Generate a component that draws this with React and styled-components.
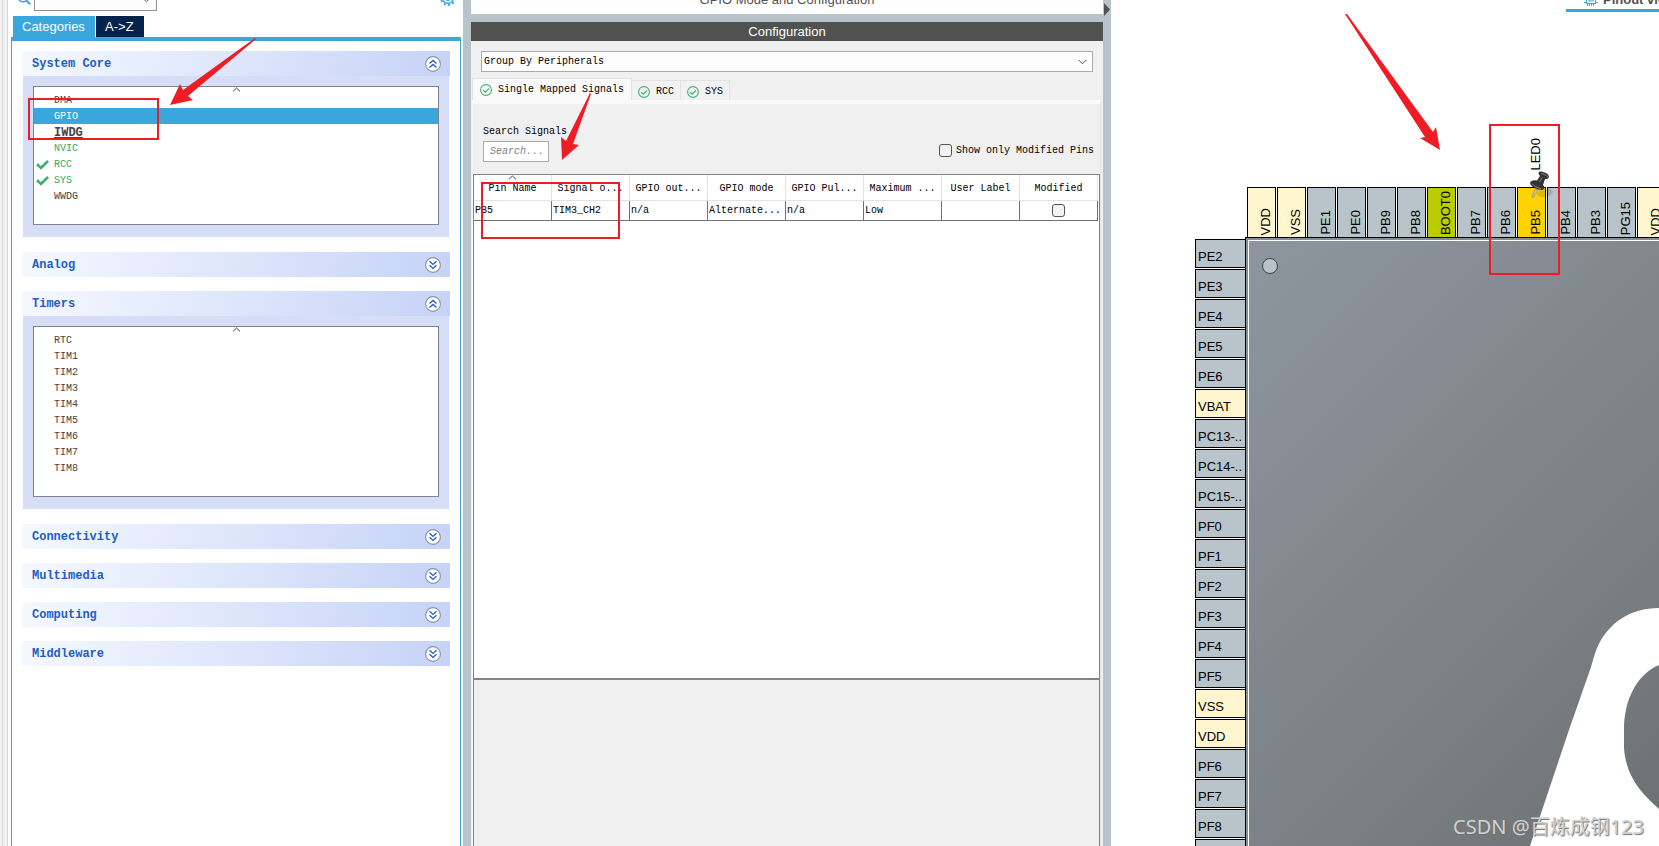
import React from "react";
import styled, { createGlobalStyle, css } from "styled-components";

const mono = `"Liberation Mono", "DejaVu Sans Mono", monospace`;
const sans = `"Liberation Sans", Arial, sans-serif`;
const blue = "#39a7db";
const steel = "#b8c4ca";
const line = "#80838f";
const red = "#ee1c25";

const GlobalStyle = createGlobalStyle`
  *, *::before, *::after { box-sizing: border-box; }
  html, body, #root { height: 100%; }
  body { margin: 0; background: #fff; overflow: hidden; font-family: ${sans}; }
  button, input, select { font: inherit; color: inherit; margin: 0; padding: 0; border: 0; background: none; border-radius: 0; }
  ul { list-style: none; margin: 0; padding: 0; }
  h1, h2, h3 { margin: 0; font: inherit; }
  svg { display: block; flex: none; }
`;

const Page = styled.div`
  height: 100vh;
  overflow: hidden;
  display: grid;
  grid-template-columns: 463fr 648fr 548fr;
`;

/* ---------- categories panel ---------- */

const CategoriesPane = styled.aside`
  position: relative;
  display: flex;
  min-width: 0;
`;

const Gutter = styled.div`
  width: 8px;
  margin-right: 3px;
  flex: none;
  background: #f0f0f0;
  border-right: 1px solid #d4d4d4;
  &::before {
    content: "";
    display: block;
    width: 3px;
    height: 100%;
    border-right: 1px solid #d9d9d9;
  }
`;

const CategoriesColumn = styled.div`
  flex: 1;
  min-width: 0;
  display: flex;
  flex-direction: column;
`;

const SearchBar = styled.div`
  height: 16px;
  padding: 0 7px 0 6px;
  display: flex;
  align-items: flex-end;
  justify-content: space-between;
  overflow: hidden;
`;

const SearchGroup = styled.div`
  display: flex;
  align-items: flex-end;
  gap: 3px;
  padding-bottom: 5px;
`;

const SearchIconBox = styled.span`
  padding-bottom: 6px;
`;

const GearButton = styled.button`
  padding-bottom: 10px;
  color: ${blue};
`;

const selectArrow = css`
  appearance: none;
  background: #fdfdfd
    url("data:image/svg+xml,%3Csvg xmlns='http://www.w3.org/2000/svg' width='9' height='6'%3E%3Cpath d='M.5 .8L4.5 4.8L8.5 .8' fill='none' stroke='%23505050'/%3E%3C/svg%3E")
    no-repeat right 5px center;
`;

const SearchSelect = styled.select`
  ${selectArrow}
  width: 123px;
  height: 22px;
  border: 1px solid #8a8f96;
`;

const CategoryTabs = styled.div`
  display: flex;
  gap: 1px;
  padding-left: 2px;
`;

const CategoryTab = styled.button`
  min-width: 48px;
  height: 21px;
  padding: 0 10px 0 9px;
  font-size: 13px;
  line-height: 21px;
  color: #fff;
  background: ${(p) => (p.$active ? blue : "#03234b")};
`;

const CategoryBody = styled.div`
  flex: 1;
  margin-right: 2px;
  padding: 10px 10px 0;
  border: 1px solid ${blue};
  border-top-width: 4px;
  border-bottom: 0;
  display: flex;
  flex-direction: column;
  gap: 14px;
`;

const SectionHeader = styled.button`
  width: 100%;
  height: 25px;
  padding: 0 9px 0 10px;
  display: flex;
  align-items: center;
  justify-content: space-between;
  background: linear-gradient(100deg, #f5f8ff, #c6d3f7);
  border-top-left-radius: 3px;
  font-family: ${mono};
  font-size: 12px;
  font-weight: bold;
  color: #215dc6;
`;

const SectionBody = styled.div`
  margin: 0 1px 1px;
  padding: 10px 10px 12px;
  background: #d6ddf7;
`;

const ItemList = styled.ul`
  position: relative;
  min-height: ${(p) => p.$minHeight}px;
  padding: 5px 0;
  background: #fff;
  border: 1px solid ${line};
`;

const SortCaret = styled.span`
  position: absolute;
  top: 0;
  left: 0;
  right: 0;
  display: flex;
  justify-content: center;
`;

const Item = styled.button`
  width: 100%;
  height: 16px;
  padding-top: 2px;
  display: grid;
  grid-template-columns: 20px 1fr;
  align-items: center;
  text-align: left;
  font-family: ${mono};
  font-size: ${(p) => (p.$strong ? 12 : 10)}px;
  line-height: 14px;
  font-weight: ${(p) => (p.$strong ? "bold" : "normal")};
  text-decoration: ${(p) => (p.$strong ? "underline" : "none")};
  color: ${(p) => (p.$selected ? "#fff" : p.$green ? "#2fa866" : "#444")};
  background: ${(p) => (p.$selected ? blue : "transparent")};
`;

const IconSlot = styled.span`
  padding-left: 2px;
`;

/* ---------- configuration panel ---------- */

const ConfigPane = styled.main`
  position: relative;
  min-width: 0;
  padding: 0 8px;
  background: ${steel};
  display: flex;
  flex-direction: column;
`;

const ModeTitle = styled.h1`
  height: 14px;
  margin-bottom: 8px;
  padding-bottom: 6px;
  background: #fff;
  color: #505250;
  font-size: 13px;
  line-height: 16px;
  overflow: hidden;
  display: flex;
  align-items: flex-end;
  justify-content: center;
`;

const ConfigTitle = styled.h2`
  height: 19px;
  background: #505250;
  color: #fff;
  font-size: 13px;
  line-height: 19px;
  text-align: center;
`;

const CollapseButton = styled.button`
  position: absolute;
  top: 3px;
  right: 0;
`;

const ConfigBody = styled.div`
  flex: 1;
  min-height: 0;
  background: #f0f0f0;
  display: flex;
  flex-direction: column;
  font-family: ${mono};
  font-size: 10px;
  color: #000;
`;

const GroupSelect = styled.select`
  ${selectArrow}
  height: 21px;
  margin: 10px 10px 6px;
  padding: 0 2px;
  border: 1px solid #a9abae;
`;

const SignalTabs = styled.div`
  height: 22px;
  padding-left: 1px;
  display: flex;
  align-items: flex-end;
`;

const SignalTab = styled.button`
  height: ${(p) => (p.$active ? 22 : 20)}px;
  padding: 0 7px;
  display: flex;
  align-items: center;
  gap: 6px;
  background: ${(p) => (p.$active ? "#fafafa" : "#f2f2f2")};
  border: 1px solid #e3e3e3;
  border-bottom: 0;
  & + & {
    border-left: 0;
    padding: 2px 6px 0;
  }
`;

const SignalPane = styled.section`
  flex: 1;
  min-height: 0;
  margin: 0 2px 0 1px;
  border-top: 4px solid #fafafa;
  border-right: 1px solid #e3e3e3;
  border-left: 1px solid #fafafa;
  display: flex;
  flex-direction: column;
`;

const FilterRow = styled.div`
  padding: 20px 6px 12px 10px;
  display: flex;
  align-items: flex-end;
  justify-content: space-between;
`;

const SearchField = styled.label`
  display: flex;
  flex-direction: column;
  align-items: flex-start;
  gap: 1px;
  line-height: 16px;
  input {
    width: 66px;
    height: 21px;
    padding: 0 6px;
    background: #fff;
    border: 1px solid #a9abae;
  }
  input::placeholder {
    color: #808080;
    font-style: italic;
    opacity: 1;
  }
`;

const CheckLabel = styled.label`
  display: flex;
  align-items: center;
  gap: 4px;
  padding-bottom: 5px;
  line-height: 13px;
`;

const CheckBox = styled.input.attrs({ type: "checkbox" })`
  appearance: none;
  display: block;
  width: 13px;
  height: 13px;
  border: 1px solid #555;
  border-radius: 3px;
  background: #f3f3f3;
`;

const TableBox = styled.div`
  flex: 504 1 0;
  min-height: 0;
  padding-right: 1px;
  background: #fff;
  border: 1px solid ${line};
  border-bottom: 0;
`;

const DetailBox = styled.div`
  flex: 167 1 0;
  border: 1px solid ${line};
  border-top-width: 2px;
  border-bottom: 0;
`;

const SignalTable = styled.table`
  width: 100%;
  table-layout: fixed;
  border-collapse: separate;
  border-spacing: 0;
  th {
    position: relative;
    height: 26px;
    padding: 2px 0 0;
    font-weight: normal;
    text-align: center;
    border-right: 1px solid #e3e3e3;
    border-bottom: 1px solid #e3e3e3;
  }
  td {
    height: 20px;
    padding: 0 1px 1px;
    border-right: 1px solid #707070;
    border-bottom: 1px solid #707070;
  }
  td ${CheckBox} {
    margin: 0 auto;
  }
`;

/* ---------- pinout panel ---------- */

const PinoutPane = styled.section`
  position: relative;
  min-width: 0;
  min-height: 0;
  overflow: hidden;
  background: #fff;
  display: flex;
  flex-direction: column;
`;

const PinoutTabs = styled.div`
  flex: none;
  display: flex;
  justify-content: flex-end;
  height: 12px;
  overflow: hidden;
`;

const PinoutTab = styled.button`
  width: 93px;
  height: 12px;
  padding: 0 0 3px 18px;
  border-bottom: 3px solid ${blue};
  display: flex;
  align-items: flex-end;
  gap: 5px;
  font-size: 13px;
  font-weight: bold;
  line-height: 12px;
  white-space: nowrap;
  color: #505250;
`;

const ChipGrid = styled.div`
  flex: 1;
  min-height: 0;
  margin-left: 84px;
  padding-top: 175px;
  display: grid;
  grid-template-columns: 50px minmax(0, 1fr);
  grid-template-rows: 50px minmax(0, 1fr);
`;

const pinTone = {
  io: steel,
  power: "#fff5ce",
  boot: "#bbcc00",
  active: "#ffd200",
};

const TopPins = styled.ul`
  grid-column: 2;
  display: flex;
  gap: 1px;
  padding-left: 2px;
  min-width: 0;
`;

const TopPin = styled.li`
  position: relative;
  flex: none;
  width: 29px;
  height: 50px;
  padding: 0 1px 2px 0;
  border: 1px solid #000;
  border-bottom: 0;
  background: ${(p) => pinTone[p.$tone]};
  display: flex;
  flex-direction: column;
  align-items: flex-end;
  justify-content: flex-end;
`;

const SideText = styled.span`
  writing-mode: vertical-rl;
  transform: rotate(180deg);
  font-size: 13px;
  line-height: 16px;
  white-space: nowrap;
`;

const PinLabel = styled.div`
  position: absolute;
  right: 1px;
  bottom: 66px;
  display: flex;
`;

const PushPin = styled.div`
  position: absolute;
  left: 11px;
  top: -17px;
  z-index: 1;
`;

const LeftPins = styled.ul`
  padding-top: 2px;
  display: flex;
  flex-direction: column;
  gap: 1px;
`;

const LeftPin = styled.li`
  flex: none;
  height: 29px;
  padding: 9px 0 0 2px;
  border: 1px solid #000;
  border-right: 0;
  background: ${(p) => pinTone[p.$tone]};
  font-size: 13px;
  line-height: 16px;
  white-space: nowrap;
`;

const ChipBody = styled.div`
  position: relative;
  min-height: 0;
  min-width: 0;
  padding: 2px 0 0 2px;
  background: #858c92;
  border-top: 1px solid #000;
  border-left: 1px solid #000;
`;

const ChipFace = styled.div`
  height: 100%;
  border-top: 1px solid #fff;
  border-left: 1px solid #fff;
  background: linear-gradient(135deg, #8d969e 0%, #868d95 26%, #80878b 46%, #7a8083 66%, #6b7073 100%);
  display: flex;
  justify-content: space-between;
  align-items: flex-start;
`;

const PinOneMark = styled.span`
  width: 16px;
  height: 16px;
  margin: 17px 0 0 13px;
  border-radius: 50%;
  border: 1px solid #3c4246;
  background: ${steel};
`;

const ChipLogo = styled.div`
  position: absolute;
  right: 0;
  bottom: 0;
`;

/* ---------- drawn over the content ---------- */

const MarkBox = styled.div`
  position: absolute;
  left: ${(p) => p.$x}px;
  top: ${(p) => p.$y}px;
  width: ${(p) => p.$w}px;
  height: ${(p) => p.$h}px;
  border: 2px solid ${red};
  pointer-events: none;
  z-index: 2;
`;

const ArrowLayer = styled.svg`
  position: absolute;
  left: 0;
  top: 0;
  pointer-events: none;
  z-index: 2;
`;

const Watermark = styled.div`
  position: absolute;
  right: 15px;
  bottom: 5px;
  font-family: "Noto Sans", "Noto Sans CJK SC", sans-serif;
  font-size: 20px;
  line-height: 28px;
  white-space: nowrap;
  color: #cfd2d3;
  text-shadow: 1px 1px 1px #707070;
  z-index: 2;
`;

function Arrow({ points }) {
  return (
    <ArrowLayer width="460" height="260" aria-hidden="true">
      <polygon points={points} fill={red} />
    </ArrowLayer>
  );
}

function ChevronBadge({ open }) {
  return (
    <svg width="16" height="16" viewBox="0 0 16 16" fill="none">
      <circle cx="8" cy="8" r="7.4" fill="#fff" stroke="#8a90a8" strokeWidth="1.1" />
      <path
        d={open ? "M4.5 7.6L8 4.4L11.5 7.6M4.5 11.6L8 8.4L11.5 11.6" : "M4.5 4.2L8 7.4L11.5 4.2M4.5 8.2L8 11.4L11.5 8.2"}
        stroke="#215dd6"
        strokeWidth="1.3"
      />
    </svg>
  );
}

function Caret() {
  return (
    <svg width="9" height="5" viewBox="0 0 9 5" fill="none">
      <path d="M1 4.3L4.5 1L8 4.3" stroke="#444" strokeWidth="1" />
    </svg>
  );
}

function Tick() {
  return (
    <svg width="13" height="10" viewBox="0 0 13 10" fill="none">
      <path d="M1 4.3L5 8L12 1" stroke="#3fae6e" strokeWidth="2.7" />
    </svg>
  );
}

function CircleTick() {
  return (
    <svg width="12" height="12" viewBox="0 0 12 12" fill="none" stroke="#45b072">
      <circle cx="6" cy="6" r="5.4" strokeWidth="1.1" />
      <path d="M3.2 6.2L5.3 8.2L9 4.4" strokeWidth="1.3" />
    </svg>
  );
}

function Magnifier() {
  return (
    <svg width="14" height="14" viewBox="0 0 14 14" fill="none" stroke={blue}>
      <circle cx="6" cy="6" r="4.8" strokeWidth="1.6" />
      <path d="M9.4 9.4L13.2 13.2" strokeWidth="2" />
    </svg>
  );
}

function Gear() {
  return (
    <svg width="16" height="16" viewBox="0 0 16 16" fill="none" stroke={blue}>
      <circle cx="8" cy="8" r="5.3" strokeWidth="1.5" />
      <circle cx="8" cy="8" r="7" strokeWidth="1.8" strokeDasharray="2.2 2.2" />
      <circle cx="8" cy="8" r="2.2" strokeWidth="1.4" />
    </svg>
  );
}

function ChipIcon() {
  return (
    <svg width="14" height="14" viewBox="0 0 14 14" fill="none" stroke={blue}>
      <rect x="2.5" y="2.5" width="9" height="9" />
      <rect x="5" y="5" width="4" height="4" />
      <path d="M3.5 0V2M5.5 0V2M7.5 0V2M9.5 0V2M3.5 12V14M5.5 12V14M7.5 12V14M9.5 12V14M0 4.5H2M0 7.5H2M0 10.5H2M12 4.5H14M12 7.5H14M12 10.5H14" />
    </svg>
  );
}

function PushPinIcon() {
  return (
    <svg width="30" height="30" viewBox="0 0 30 30">
      <ellipse cx="16" cy="22" rx="8" ry="4" fill="#000" opacity=".13" transform="rotate(-10 16 22)" />
      <path d="M6 18L9 19L4 27L3 26Z" fill="#c4c4c4" stroke="#777" strokeWidth=".5" />
      <path d="M1 12C2 9 5 9 8 9.4L11 5C9 3 9 1 11 .6C15 .6 20 3 20 6C19 8 18 8 16 8L14 14C16 16 16 18 13 19C8 19 2 16 1 12Z" fill="#333" />
      <path d="M12 2.6C15 3 17 4 19 6M10.500 11L13 6.500M3 12.500C5 15 8 17 12 17.600" fill="none" stroke="#888" strokeWidth="1" />
    </svg>
  );
}

const coreItems = [
  { name: "DMA" },
  { name: "GPIO", selected: true },
  { name: "IWDG", strong: true },
  { name: "NVIC", green: true },
  { name: "RCC", green: true, ticked: true },
  { name: "SYS", green: true, ticked: true },
  { name: "WWDG" },
];

const timerItems = ["RTC", "TIM1", "TIM2", "TIM3", "TIM4", "TIM5", "TIM6", "TIM7", "TIM8"].map((name) => ({ name }));

const sections = [
  { title: "System Core", items: coreItems, minHeight: 139 },
  { title: "Analog" },
  { title: "Timers", items: timerItems, minHeight: 171 },
  { title: "Connectivity" },
  { title: "Multimedia" },
  { title: "Computing" },
  { title: "Middleware" },
];

function Section({ title, items, minHeight }) {
  return (
    <section>
      <SectionHeader aria-expanded={Boolean(items)}>
        {title}
        <ChevronBadge open={Boolean(items)} />
      </SectionHeader>
      {items && (
        <SectionBody>
          <ItemList $minHeight={minHeight}>
            <SortCaret as="li" aria-hidden="true">
              <Caret />
            </SortCaret>
            {items.map((item) => (
              <li key={item.name}>
                <Item $selected={item.selected} $strong={item.strong} $green={item.green}>
                  <IconSlot>{item.ticked && <Tick />}</IconSlot>
                  {item.name}
                </Item>
              </li>
            ))}
          </ItemList>
        </SectionBody>
      )}
    </section>
  );
}

const columns = ["Pin Name", "Signal o...", "GPIO out...", "GPIO mode", "GPIO Pul...", "Maximum ...", "User Label", "Modified"];
const row = ["PB5", "TIM3_CH2", "n/a", "Alternate...", "n/a", "Low", ""];

const topPins = [
  ["VDD", "power"], ["VSS", "power"], ["PE1", "io"], ["PE0", "io"], ["PB9", "io"], ["PB8", "io"], ["BOOT0", "boot"],
  ["PB7", "io"], ["PB6", "io"], ["PB5", "active", "LED0"], ["PB4", "io"], ["PB3", "io"], ["PG15", "io"], ["VDD", "power"],
];

const leftPins = [
  ["PE2", "io"], ["PE3", "io"], ["PE4", "io"], ["PE5", "io"], ["PE6", "io"], ["VBAT", "power"], ["PC13-..", "io"],
  ["PC14-..", "io"], ["PC15-..", "io"], ["PF0", "io"], ["PF1", "io"], ["PF2", "io"], ["PF3", "io"], ["PF4", "io"],
  ["PF5", "io"], ["VSS", "power"], ["VDD", "power"], ["PF6", "io"], ["PF7", "io"], ["PF8", "io"], ["", "io"],
];

export default function App() {
  return (
    <Page>
      <GlobalStyle />
      <CategoriesPane>
        <Gutter />
        <CategoriesColumn>
          <SearchBar>
            <SearchGroup>
              <SearchIconBox>
                <Magnifier />
              </SearchIconBox>
              <SearchSelect aria-label="Search" />
            </SearchGroup>
            <GearButton aria-label="Settings">
              <Gear />
            </GearButton>
          </SearchBar>
          <CategoryTabs>
            <CategoryTab $active>Categories</CategoryTab>
            <CategoryTab>A-&gt;Z</CategoryTab>
          </CategoryTabs>
          <CategoryBody>
            {sections.map((s) => (
              <Section key={s.title} {...s} />
            ))}
          </CategoryBody>
        </CategoriesColumn>
        <MarkBox $x={28} $y={98} $w={131} $h={42} />
        <Arrow points="170,105 180,84 183,90 255,38 256,39 188,96 193,100" />
      </CategoriesPane>

      <ConfigPane>
        <ModeTitle>GPIO Mode and Configuration</ModeTitle>
        <CollapseButton aria-label="Expand">
          <svg width="8" height="13" viewBox="0 0 8 13">
            <path d="M1 0L7 6.5L1 13Z" fill="#505250" />
          </svg>
        </CollapseButton>
        <ConfigTitle>Configuration</ConfigTitle>
        <ConfigBody>
          <GroupSelect aria-label="Group signals">
            <option>Group By Peripherals</option>
          </GroupSelect>
          <SignalTabs>
            <SignalTab $active>
              <CircleTick />
              Single Mapped Signals
            </SignalTab>
            <SignalTab>
              <CircleTick />
              RCC
            </SignalTab>
            <SignalTab>
              <CircleTick />
              SYS
            </SignalTab>
          </SignalTabs>
          <SignalPane>
            <FilterRow>
              <SearchField>
                Search Signals
                <input type="text" placeholder="Search..." />
              </SearchField>
              <CheckLabel>
                <CheckBox />
                Show only Modified Pins
              </CheckLabel>
            </FilterRow>
            <TableBox>
              <SignalTable>
                <thead>
                  <tr>
                    {columns.map((c, i) => (
                      <th key={c}>
                        {i === 0 && (
                          <SortCaret>
                            <Caret />
                          </SortCaret>
                        )}
                        {c}
                      </th>
                    ))}
                  </tr>
                </thead>
                <tbody>
                  <tr>
                    {row.map((c, i) => (
                      <td key={i}>{c}</td>
                    ))}
                    <td>
                      <CheckBox aria-label="Modified" />
                    </td>
                  </tr>
                </tbody>
              </SignalTable>
            </TableBox>
            <DetailBox />
          </SignalPane>
        </ConfigBody>
        <MarkBox $x={18} $y={182} $w={139} $h={57} />
        <Arrow points="99,160 98,137 103,141 127,93 128,94 110,144 116,145" />
      </ConfigPane>

      <PinoutPane>
        <PinoutTabs>
          <PinoutTab>
            <ChipIcon />
            Pinout view
          </PinoutTab>
        </PinoutTabs>
        <ChipGrid>
          <TopPins>
            {topPins.map(([name, tone, label], i) => (
              <TopPin key={i} $tone={tone}>
                <SideText>{name}</SideText>
                {label && (
                  <>
                    <PinLabel>
                      <SideText>{label}</SideText>
                    </PinLabel>
                    <PushPin>
                      <PushPinIcon />
                    </PushPin>
                  </>
                )}
              </TopPin>
            ))}
          </TopPins>
          <LeftPins>
            {leftPins.map(([name, tone], i) => (
              <LeftPin key={i} $tone={tone}>
                {name}
              </LeftPin>
            ))}
          </LeftPins>
          <ChipBody>
            <ChipFace>
              <PinOneMark />
            </ChipFace>
            <ChipLogo>
              <svg width="129" height="238" viewBox="0 0 129 238">
                <path
                  d="M0 238L40 119L61 59C63 52 65 45 67 40C78 15 100 0 129 0V57C108 66 94 90 94 122V140C96 168 110 184 129 201V238Z"
                  fill="#fff"
                />
              </svg>
            </ChipLogo>
          </ChipBody>
        </ChipGrid>
        <MarkBox $x={378} $y={124} $w={71} $h={151} />
        <Arrow points="329,150 325,127 322,132 236,14 234,14 314,137 309,138" />
        <Watermark>CSDN @百炼成钢123</Watermark>
      </PinoutPane>
    </Page>
  );
}
